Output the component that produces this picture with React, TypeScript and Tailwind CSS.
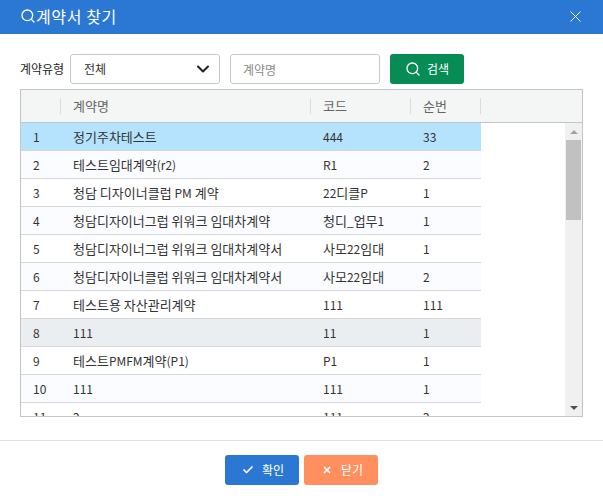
import React from "react";
import { Search, X, ChevronDown, Check } from "lucide-react";

// One row of the contract list
interface Contract {
  no: number;
  name: string;
  code: string;
  seq: string;
}

const CONTRACTS: Contract[] = [
  { no: 1, name: "정기주차테스트", code: "444", seq: "33" },
  { no: 2, name: "테스트임대계약(r2)", code: "R1", seq: "2" },
  { no: 3, name: "청담 디자이너클럽 PM 계약", code: "22디클P", seq: "1" },
  { no: 4, name: "청담디자이너그럽 위워크 임대차계약", code: "청디_업무1", seq: "1" },
  { no: 5, name: "청담디자이너그럽 위워크 임대차계약서", code: "사모22임대", seq: "1" },
  { no: 6, name: "청담디자이너클럽 위워크 임대차계약서", code: "사모22임대", seq: "2" },
  { no: 7, name: "테스트용 자산관리계약", code: "111", seq: "111" },
  { no: 8, name: "111", code: "11", seq: "1" },
  { no: 9, name: "테스트PMFM계약(P1)", code: "P1", seq: "1" },
  { no: 10, name: "111", code: "111", seq: "1" },
  { no: 11, name: "2", code: "111", seq: "2" },
];

const rowColor = (no: number) => {
  if (no === 1) return "bg-[#b5e3fd]";
  if (no === 8) return "bg-[#ebeef0]";
  return no % 2 === 0 ? "bg-[#fbfcff]" : "bg-white";
};

// hangul runs are a little bigger than latin runs in the grid
const Mixed = ({ text }: { text: string }) => (
  <>
    {text.split(/([\uac00-\ud7a3 ]+)/).map((part, i) =>
      i % 2 === 1 ? (
        <span key={i} className="text-[13px]">{part}</span>
      ) : (
        <span key={i}>{part}</span>
      )
    )}
  </>
);

export default function App() {
  return (
    <div className="w-[603px] h-[500px] bg-white overflow-hidden flex flex-col text-[12px] text-[#333] font-['Noto_Sans_CJK_KR','Liberation_Sans',sans-serif]">
      {/* Title bar */}
      <div className="h-[34px] shrink-0 bg-[#2b78d4] flex items-center justify-between pl-5 pr-[18px] pb-[2px] text-white">
        <div className="flex items-center text-[16px] tracking-[0.6px]">
          <Search size={16} strokeWidth={2} />
          <span>계약서 찾기</span>
        </div>
        <X size={19} strokeWidth={1.2} />
      </div>

      {/* Search filters */}
      <div className="mt-5 ml-5 flex items-center h-[30px]">
        <label className="w-[50px] whitespace-nowrap text-[12px] text-[#222]">계약유형</label>
        <div className="w-[150px] h-[30px] border border-[#c8c8c8] rounded-[3px] flex items-center justify-between pl-[13px] pr-[6px] text-[#333]">
          <span>전체</span>
          <ChevronDown size={20} strokeWidth={2.5} className="text-[#222]" />
        </div>
        <input
          placeholder="계약명"
          className="ml-[10px] w-[150px] h-[30px] border border-[#c8c8c8] rounded-[3px] px-3 text-[12px] placeholder:text-[#888] outline-none"
        />
        <button className="ml-[10px] w-[74px] h-[30px] bg-[#088c56] text-white rounded-[3px] flex items-center justify-center gap-[6px]">
          <Search size={16} strokeWidth={2} />
          <span>검색</span>
        </button>
      </div>

      {/* Contract grid */}
      <div className="mt-[5px] ml-5 w-[563px] h-[328px] border border-[#c2c4c6] flex flex-col overflow-hidden">
        <div className="h-[33px] shrink-0 bg-[#f4f5f5] border-b border-[#c2c4c6] flex items-center text-[#666] text-[13px]">
          <div className="w-[40px] h-4 border-r border-[#dcdcdc]" />
          <div className="w-[250px] h-4 border-r border-[#dcdcdc] pl-3 flex items-center">계약명</div>
          <div className="w-[100px] h-4 border-r border-[#dcdcdc] pl-3 flex items-center">코드</div>
          <div className="w-[70px] h-4 border-r border-[#dcdcdc] pl-3 flex items-center">순번</div>
        </div>
        <div className="flex flex-1 min-h-0">
          <div className="w-[460px] shrink-0 overflow-hidden">
            {CONTRACTS.map((c) => (
              <div key={c.no} className={`h-[28px] shrink-0 flex items-center border-b border-[#d5d8dc] ${rowColor(c.no)}`}>
                <div className="w-[40px] pl-3 text-[#333]">{c.no}</div>
                <div className="w-[250px] pl-3 whitespace-nowrap"><Mixed text={c.name} /></div>
                <div className="w-[100px] pl-3"><Mixed text={c.code} /></div>
                <div className="w-[70px] pl-3">{c.seq}</div>
              </div>
            ))}
          </div>
          <div className="flex-1" />
          {/* Scrollbar */}
          <div className="w-[17px] shrink-0 bg-[#f0f0f0] flex flex-col items-center">
            <div className="h-[17px] w-full flex items-center justify-center">
              <div className="w-0 h-0 border-x-[4px] border-x-transparent border-b-[4px] border-b-[#a3a3a3]" />
            </div>
            <div className="w-[15px] h-[80px] bg-[#c1c1c1]" />
            <div className="flex-1" />
            <div className="h-[17px] w-full flex items-center justify-center">
              <div className="w-0 h-0 border-x-[4px] border-x-transparent border-t-[4px] border-t-[#505050]" />
            </div>
          </div>
        </div>
      </div>

      {/* Footer actions */}
      <div className="mt-[23px] border-t border-[#e0e0e0] pt-[14px] flex justify-center gap-[5px]">
        <button className="w-[74px] h-[30px] bg-[#2b78d4] text-white rounded-[3px] flex items-center pl-[17px] gap-[8px]">
          <Check size={12} strokeWidth={3.5} />
          <span>확인</span>
        </button>
        <button className="w-[74px] h-[30px] bg-[#ff8f5f] text-white rounded-[3px] flex items-center pl-[18px] gap-[9px]">
          <X size={10} strokeWidth={4} />
          <span>닫기</span>
        </button>
      </div>
    </div>
  );
}
